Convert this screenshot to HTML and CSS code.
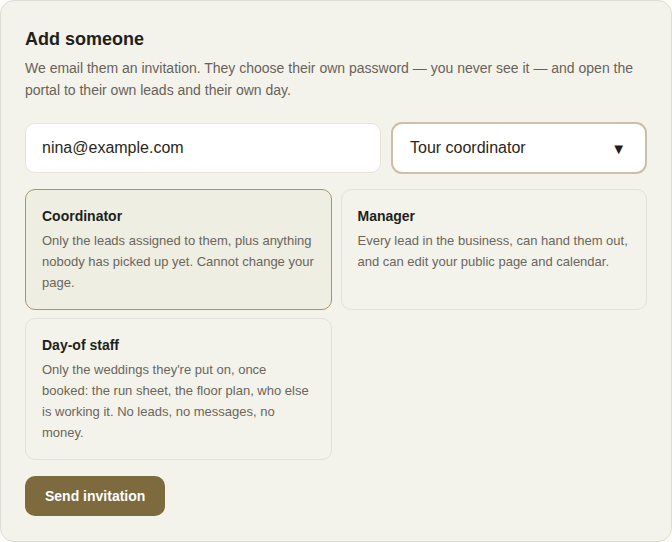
FILE: index.html
```html
<!DOCTYPE html>
<html lang="en">
<head>
<meta charset="utf-8">
<title>Add someone</title>
<link rel="stylesheet" href="styles.css">
</head>
<body>
<section class="panel">
  <h2 class="title">Add someone</h2>
  <p class="lead">We email them an invitation. They choose their own password — you never see it — and open the portal to their own leads and their own day.</p>
  <div class="fields">
    <input class="email" type="email" value="nina@example.com">
    <div class="select"><span>Tour coordinator</span><span class="caret">▼</span></div>
  </div>
  <div class="roles">
    <div class="role selected">
      <div class="role-name">Coordinator</div>
      <div class="role-desc">Only the leads assigned to them, plus anything nobody has picked up yet. Cannot change your page.</div>
    </div>
    <div class="role">
      <div class="role-name">Manager</div>
      <div class="role-desc">Every lead in the business, can hand them out, and can edit your public page and calendar.</div>
    </div>
    <div class="role">
      <div class="role-name">Day-of staff</div>
      <div class="role-desc">Only the weddings they're put on, once booked: the run sheet, the floor plan, who else is working it. No leads, no messages, no money.</div>
    </div>
  </div>
  <button class="send" type="button">Send invitation</button>
</section>
</body>
</html>
```

FILE: styles.css
```css
html, body {
  margin: 0;
  padding: 0;
  background: #fbfbf7;
}
body {
  font-family: "Liberation Sans", Arial, sans-serif;
}
.panel {
  box-sizing: border-box;
  width: 672px;
  height: 542px;
  background: #f3f3eb;
  border: 1px solid #deddd3;
  border-radius: 14px;
  padding: 24px;
}
.title {
  margin: 0;
  font-size: 18px;
  line-height: 28px;
  font-weight: 700;
  color: #221f1a;
}
.lead {
  margin: 4px 0 0;
  font-size: 14px;
  line-height: 22px;
  color: #68625a;
}
.fields {
  display: grid;
  grid-template-columns: 356px 1fr;
  gap: 10px;
  margin-top: 21px;
  align-items: center;
}
.email {
  box-sizing: border-box;
  height: 50px;
  width: 100%;
  border: 1px solid #e6e4da;
  border-radius: 10px;
  background: #ffffff;
  padding: 0 16px;
  font-family: "Liberation Sans", Arial, sans-serif;
  font-size: 16px;
  color: #2a2620;
  outline: none;
}
.select {
  box-sizing: border-box;
  height: 52px;
  border: 2px solid #cbbfa5;
  border-radius: 11px;
  background: #ffffff;
  padding: 0 19px 0 17px;
  display: flex;
  align-items: center;
  justify-content: space-between;
  font-size: 16px;
  color: #2a2620;
}
.caret {
  font-size: 15px;
  color: #1f1c17;
}
.roles {
  display: grid;
  grid-template-columns: 1fr 1fr;
  gap: 8px 9px;
  margin-top: 15px;
  align-items: stretch;
}
.role {
  box-sizing: border-box;
  border: 1px solid #e3e2d8;
  border-radius: 10px;
  background: #f3f3eb;
  padding: 16px;
}
.role.selected {
  border-color: #a8946c;
  background: #eeeee3;
}
.role-name {
  font-size: 14px;
  line-height: 20px;
  font-weight: 700;
  color: #221f1a;
}
.role-desc {
  margin-top: 4px;
  font-size: 13px;
  line-height: 21px;
  color: #6b655b;
}
.send {
  margin-top: 16px;
  height: 40px;
  padding: 0 20px;
  border: none;
  border-radius: 10px;
  background: #7d6a3f;
  color: #ffffff;
  font-family: "Liberation Sans", Arial, sans-serif;
  font-size: 14px;
  font-weight: 700;
  cursor: pointer;
}
```
